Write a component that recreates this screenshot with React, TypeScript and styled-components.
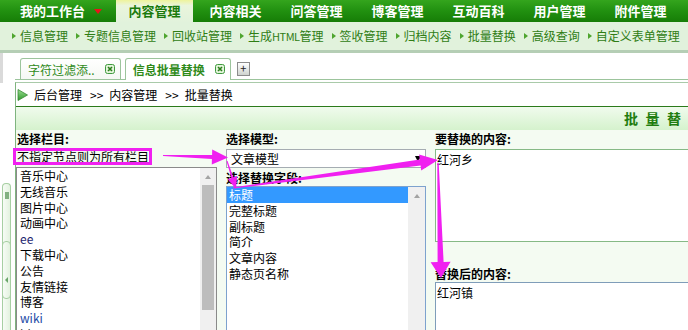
import React from 'react';
import styled, { createGlobalStyle } from 'styled-components';

const GlobalStyle = createGlobalStyle`
  html, body {
    margin: 0;
    padding: 0;
    overflow: hidden;
    background: #fff;
  }
  body {
    font-family: "Noto Sans CJK SC", "Liberation Sans", sans-serif;
    font-size: 12px;
    color: #000;
  }
`;

const Page = styled.div`
  position: relative;
  width: 1310px;
  height: 330px;
  overflow: hidden;
`;

// top green menu
const TopNav = styled.div`
  display: flex;
  height: 22px;
  background: linear-gradient(180deg, #34a51d 0%, #219010 50%, #167d07 100%);
`;

const NavItem = styled.div<{ $active?: boolean; $first?: boolean }>`
  display: flex;
  align-items: center;
  justify-content: ${p => (p.$first ? 'flex-start' : 'center')};
  flex: none;
  box-sizing: border-box;
  width: ${p => (p.$first ? 114 : p.$active ? 77 : 81)}px;
  margin: 0 ${p => (p.$active ? 2 : 0)}px;
  padding-left: ${p => (p.$first ? 20 : 0)}px;
  font-size: 13px;
  font-weight: bold;
  line-height: 22px;
  white-space: nowrap;
  color: ${p => (p.$active ? '#1b7a0c' : '#fff')};
  background: ${p =>
    p.$active
      ? 'linear-gradient(180deg, #eef39c 0%, #eaf5dc 25%, #e2f2dc 100%)'
      : 'none'};
`;

const Caret = styled.i`
  width: 0;
  height: 0;
  margin-left: 9px;
  border-left: 4px solid transparent;
  border-right: 4px solid transparent;
  border-top: 5px solid #e8141a;
`;

// second row of links
const SubNav = styled.div`
  display: flex;
  align-items: center;
  height: 28px;
  padding-left: 12px;
  background: #e1f2dc;
  border-bottom: 3px solid #b5ceb5;
`;

const SubItem = styled.span`
  display: flex;
  align-items: center;
  flex: none;
  margin-right: 8px;
  color: #2f7d14;
  font-size: 12px;
  line-height: 16px;
  white-space: nowrap;
`;

const SubArrow = styled.i`
  width: 0;
  height: 0;
  margin-right: 4px;
  border-left: 4px solid #4ea52f;
  border-top: 3.5px solid transparent;
  border-bottom: 3.5px solid transparent;
`;

const Latin = styled.span`
  font-size: 11px;
  letter-spacing: -0.5px;
`;

const Workspace = styled.div`
  display: flex;
  height: 277px;
  overflow: hidden;
`;

// collapse rail on the left
const LeftRail = styled.div`
  flex: none;
  width: 15px;
  display: flex;
  flex-direction: column;
`;

const RailCap = styled.div`
  flex: none;
  height: 30px;
  border-left: 3px solid #dadada;
`;

const Splitter = styled.div`
  flex: 1;
  width: 9px;
  margin: 100px 0 0 2px;
  box-sizing: border-box;
  border: 1px solid #a7cfa3;
  border-bottom: none;
  border-radius: 4px 4px 0 0;
  background: linear-gradient(90deg, #f7fcf6, #e3f2df);
  display: flex;
  flex-direction: column;
  align-items: center;
`;

const Grip = styled.div`
  margin-top: 8px;
  width: 4px;
  height: 7px;
  background-image: radial-gradient(circle, #7fae7f 0.7px, transparent 1px);
  background-size: 2px 2px;
`;

const Toggle = styled.div`
  flex: none;
  margin-top: 42px;
  width: 9px;
  height: 58px;
  box-sizing: border-box;
  border: 1px solid #a7cfa3;
  border-radius: 4px;
  display: flex;
  align-items: center;
  justify-content: center;
  padding-top: 20px;
`;

const ToggleArrow = styled.i`
  width: 0;
  height: 0;
  border-right: 3px solid #6aa66a;
  border-top: 3px solid transparent;
  border-bottom: 3px solid transparent;
`;

const Main = styled.div`
  flex: 1;
  display: flex;
  flex-direction: column;
  min-height: 0;
`;

// open page tabs
const TabStrip = styled.div`
  flex: none;
  display: flex;
  align-items: flex-end;
  gap: 4px;
  height: 26px;
  padding-left: 5px;
  border-bottom: 1px solid #9cc49c;
`;

const Tab = styled.div<{ $active?: boolean }>`
  display: flex;
  align-items: center;
  gap: 10px;
  box-sizing: border-box;
  height: ${p => (p.$active ? 22 : 21)}px;
  margin-bottom: ${p => (p.$active ? -1 : 0)}px;
  padding: ${p => (p.$active ? '0 5px 1px 7px' : '0 5px 0 7px')};
  border: 1px solid #9cc49c;
  border-bottom: none;
  border-radius: 3px 3px 0 0;
  background: ${p => (p.$active ? '#fff' : 'linear-gradient(180deg, #fff, #f5f8f4)')};
  color: #2f8a1a;
  font-size: 12px;
  font-weight: ${p => (p.$active ? 'bold' : 'normal')};
  white-space: nowrap;
`;

const AddTab = styled.div`
  width: 13px;
  height: 14px;
  box-sizing: border-box;
  margin: 0 0 3px 2px;
  border: 1px solid #8c8c8c;
  background: linear-gradient(180deg, #fff, #cfd3cf);
  font-size: 11px;
  line-height: 11px;
  text-align: center;
  color: #222;
`;

const ContentFrame = styled.div`
  flex: 1;
  min-height: 0;
  display: flex;
  flex-direction: column;
  margin-top: 2px;
  border-top: 1px solid #a9caa9;
  border-left: 1px solid #7fb47f;
`;

const Breadcrumb = styled.div`
  flex: none;
  display: flex;
  align-items: center;
  height: 23px;
  padding-left: 1px;
  font-size: 12px;
`;

const Crumbs = styled.span`
  margin-left: 6px;
`;

const Sep = styled.span`
  margin: 0 6px 0 8px;
`;

const Panel = styled.div`
  flex: 1;
  min-height: 0;
  display: flex;
  flex-direction: column;
  border-top: 1px solid #2b7a1b;
`;

const PanelHeader = styled.div`
  flex: none;
  height: 23px;
  line-height: 23px;
  padding-left: 8px;
  text-align: center;
  background: linear-gradient(180deg, #f0fbed, #d5f2cd);
  color: #1e7d0f;
  font-size: 14px;
  font-weight: bold;
  letter-spacing: 7.5px;
`;

const PanelBody = styled.div`
  flex: 1;
  min-height: 0;
  display: grid;
  grid-template-columns: 201px 200px 1fr;
  grid-template-rows: 100%;
  column-gap: 9px;
  padding-top: 1px;
  background: #f4fbf2;
  overflow: hidden;
`;

const Column = styled.div`
  display: flex;
  flex-direction: column;
  min-height: 0;
  overflow: hidden;
`;

const Label = styled.div<{ $gap?: number; $indent?: number; $height?: number }>`
  flex: none;
  height: ${p => p.$height || 16}px;
  line-height: ${p => p.$height || 16}px;
  margin-top: ${p => p.$gap || 0}px;
  padding-left: ${p => p.$indent || 0}px;
  font-size: 12px;
  font-weight: bold;
  white-space: nowrap;
`;

const Hint = styled.div`
  flex: none;
  height: 20px;
  line-height: 20px;
  padding-left: 1px;
  white-space: nowrap;
`;

const Select = styled.div`
  flex: none;
  display: flex;
  align-items: center;
  height: 19px;
  box-sizing: border-box;
  margin-top: 2px;
  padding-left: 4px;
  border: 1px solid #a5acb2;
  background: #fff;
`;

const SelectArrow = styled.i`
  margin-left: auto;
  margin-right: 4px;
  width: 0;
  height: 0;
  border-left: 3.5px solid transparent;
  border-right: 3.5px solid transparent;
  border-top: 6px solid #000;
`;

const ListBox = styled.div<{ $border: string }>`
  flex: 1;
  min-height: 0;
  display: flex;
  border: 1px solid ${p => p.$border};
  border-bottom: none;
  background: #fff;
  overflow: hidden;
`;

const ListItems = styled.div`
  flex: 1;
`;

const ListItem = styled.div<{ $selected?: boolean; $pad: number; $color?: string }>`
  height: 15.8px;
  line-height: 15.8px;
  padding-left: ${p => p.$pad}px;
  white-space: nowrap;
  background: ${p => (p.$selected ? '#3399ff' : 'transparent')};
  color: ${p => (p.$selected ? '#fff' : p.$color || '#000')};
`;

const ScrollTrack = styled.div<{ $width: number }>`
  flex: none;
  width: ${p => p.$width}px;
  display: flex;
  flex-direction: column;
  align-items: center;
  background: #f0f0f0;
`;

const ScrollUp = styled.i`
  flex: none;
  margin-top: 7px;
  width: 0;
  height: 0;
  border-left: 3.5px solid transparent;
  border-right: 3.5px solid transparent;
  border-bottom: 4px solid #a3a3a3;
`;

const ScrollThumb = styled.div`
  flex: none;
  margin-top: 6px;
  width: 12px;
  height: 125px;
  background: #bdbdbd;
`;

const TextBox = styled.div<{ $border: string; $height?: number; $gap?: number }>`
  box-sizing: border-box;
  height: ${p => (p.$height ? `${p.$height}px` : 'auto')};
  flex: ${p => (p.$height ? 'none' : 1)};
  min-height: 0;
  margin-top: ${p => (p.$gap === undefined ? 2 : p.$gap)}px;
  padding: 2px 1px;
  border: 1px solid ${p => p.$border};
  border-bottom: ${p => (p.$height ? `1px solid ${p.$border}` : 'none')};
  background: #fff;
  line-height: 16px;
`;

const Overlay = styled.svg`
  position: absolute;
  left: 0;
  top: 0;
  pointer-events: none;
`;

const topMenu = ['内容管理', '内容相关', '问答管理', '博客管理', '互动百科', '用户管理', '附件管理'];

const subMenu: React.ReactNode[] = [
  '信息管理',
  '专题信息管理',
  '回收站管理',
  <>生成<Latin>HTML</Latin>管理</>,
  '签收管理',
  '归档内容',
  '批量替换',
  '高级查询',
  '自定义表单管理',
  '',
];

const columns = [
  { name: '音乐中心' },
  { name: '无线音乐' },
  { name: '图片中心' },
  { name: '动画中心' },
  { name: 'ee', color: '#23246e' },
  { name: '下载中心' },
  { name: '公告' },
  { name: '友情链接' },
  { name: '博客' },
  { name: 'wiki', color: '#1d4aa6' },
  { name: 'bbs' },
];

const fields = ['标题', '完整标题', '副标题', '简介', '文章内容', '静态页名称'];

const CloseIcon = () => (
  <svg width="10" height="10" viewBox="0 0 10 10">
    <rect x="0.5" y="0.5" width="9" height="9" rx="2" fill="#e2f4da" stroke="#3f9a3f" />
    <path d="M3 3 L7 7 M7 3 L3 7" stroke="#2d7d1d" strokeWidth="1.6" />
  </svg>
);

const PlayIcon = () => (
  <svg width="11" height="12" viewBox="0 0 11 12">
    <defs>
      <linearGradient id="play" x1="0" y1="0" x2="0" y2="1">
        <stop offset="0" stopColor="#9bdc94" />
        <stop offset="1" stopColor="#2e9a2a" />
      </linearGradient>
    </defs>
    <path d="M1 0.5 L10.5 6 L1 11.5 Z" fill="url(#play)" stroke="#3a8a36" strokeWidth="0.8" />
  </svg>
);

// tapered annotation arrow from tail to tip
const arrow = (
  tx: number, ty: number, px: number, py: number,
  w0: number, w1: number, len: number, half: number
) => {
  const dx = px - tx;
  const dy = py - ty;
  const d = Math.hypot(dx, dy);
  const ux = dx / d;
  const uy = dy / d;
  const nx = -uy;
  const ny = ux;
  const bx = px - ux * len;
  const by = py - uy * len;
  const pts = [
    [tx + (nx * w0) / 2, ty + (ny * w0) / 2],
    [bx + (nx * w1) / 2, by + (ny * w1) / 2],
    [bx + nx * half, by + ny * half],
    [px, py],
    [bx - nx * half, by - ny * half],
    [bx - (nx * w1) / 2, by - (ny * w1) / 2],
    [tx - (nx * w0) / 2, ty - (ny * w0) / 2],
  ];
  return pts.map(p => `${p[0].toFixed(1)},${p[1].toFixed(1)}`).join(' ');
};

const MAGENTA = '#f020f0';

const App: React.FC = () => {
  return (
    <Page>
      <GlobalStyle />
      <TopNav>
        <NavItem $first>
          我的工作台
          <Caret />
        </NavItem>
        {topMenu.map((m, i) => (
          <NavItem key={m} $active={i === 0}>
            {m}
          </NavItem>
        ))}
      </TopNav>

      <SubNav>
        {subMenu.map((m, i) => (
          <SubItem key={i}>
            <SubArrow />
            {m}
          </SubItem>
        ))}
      </SubNav>

      <Workspace>
        <LeftRail>
          <RailCap />
          <Splitter>
            <Grip />
            <Toggle>
              <ToggleArrow />
            </Toggle>
          </Splitter>
        </LeftRail>

        <Main>
          <TabStrip>
            <Tab>
              字符过滤添..
              <CloseIcon />
            </Tab>
            <Tab $active>
              信息批量替换
              <CloseIcon />
            </Tab>
            <AddTab>+</AddTab>
          </TabStrip>

          <ContentFrame>
            <Breadcrumb>
              <PlayIcon />
              <Crumbs>
                后台管理<Sep>&gt;&gt;</Sep>内容管理<Sep>&gt;&gt;</Sep>批量替换
              </Crumbs>
            </Breadcrumb>

            <Panel>
              <PanelHeader>批量替换</PanelHeader>
              <PanelBody>
                <Column>
                  <Label $indent={1}>选择栏目:</Label>
                  <Hint>不指定节点则为所有栏目</Hint>
                  <ListBox $border="#8a8a8a">
                    <ListItems>
                      {columns.map(c => (
                        <ListItem key={c.name} $pad={3} $color={c.color}>
                          {c.name}
                        </ListItem>
                      ))}
                    </ListItems>
                    <ScrollTrack $width={16}>
                      <ScrollUp />
                      <ScrollThumb />
                    </ScrollTrack>
                  </ListBox>
                </Column>

                <Column>
                  <Label>选择模型:</Label>
                  <Select>
                    文章模型
                    <SelectArrow />
                  </Select>
                  <Label $gap={1} $height={17}>选择替换字段:</Label>
                  <ListBox $border="#7da2ce">
                    <ListItems>
                      {fields.map((f, i) => (
                        <ListItem key={f} $pad={2} $selected={i === 0}>
                          {f}
                        </ListItem>
                      ))}
                    </ListItems>
                    <ScrollTrack $width={17}>
                      <ScrollUp />
                    </ScrollTrack>
                  </ListBox>
                </Column>

                <Column>
                  <Label>要替换的内容:</Label>
                  <TextBox $border="#86b986" $height={93}>红河乡</TextBox>
                  <Label $gap={24}>替换后的内容:</Label>
                  <TextBox $border="#7f9db9" $gap={0}>红河镇</TextBox>
                </Column>
              </PanelBody>
            </Panel>
          </ContentFrame>
        </Main>
      </Workspace>

      <Overlay width="688" height="330" viewBox="0 0 688 330">
        <rect x="14.5" y="149.5" width="136" height="14" fill="none" stroke={MAGENTA} strokeWidth="3" />
        <polygon points={arrow(163, 155.5, 228, 157.5, 1, 4, 16, 7.5)} fill={MAGENTA} />
        <polygon points={arrow(227, 161, 236, 189, 1, 2, 12, 5)} fill={MAGENTA} />
        <polygon points={arrow(233, 188, 438, 160, 1, 6, 18, 8)} fill={MAGENTA} />
        <polygon points={arrow(438, 163, 441, 278, 1.5, 6, 16, 10)} fill={MAGENTA} />
      </Overlay>
    </Page>
  );
};

export default App;
